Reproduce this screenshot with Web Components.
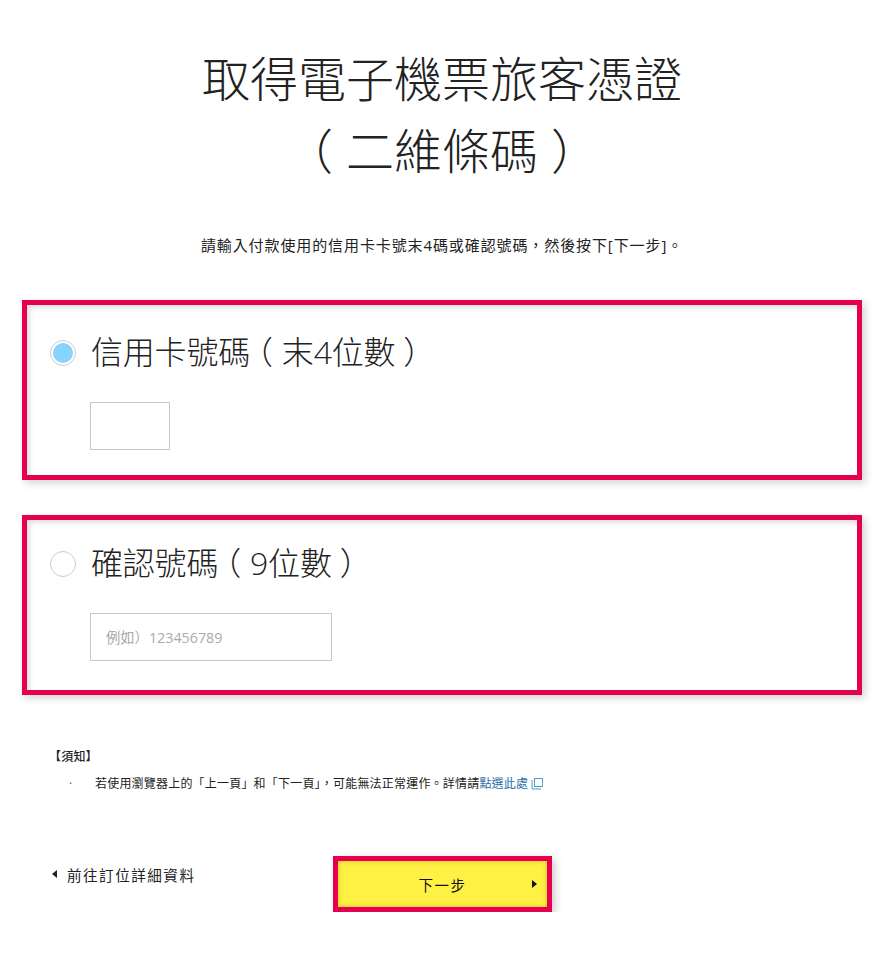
<!DOCTYPE html>
<html lang="zh-Hant">
<head>
<meta charset="utf-8">
<title>取得電子機票旅客憑證</title>
<style>
  body {
    margin: 0;
    background: #fff;
    color: #222;
    font-family: "Open Sans", "Noto Sans CJK TC", sans-serif;
  }
</style>
</head>
<body>
<ticket-page>
  <span slot="title">取得電子機票旅客憑證<br>（二維條碼）</span>
  <span slot="lead">請輸入付款使用的信用卡卡號末4碼或確認號碼，然後按下[下一步]。</span>
  <option-box label="信用卡號碼（末4位數）" input-width="80" top="24" checked></option-box>
  <option-box label="確認號碼（9位數）" input-width="242" top="20" placeholder="例如）123456789"></option-box>
  <notice-list heading="【須知】">若使用瀏覽器上的「上一頁」和「下一頁」，可能無法正常運作。詳情請<a href="#">點選此處</a></notice-list>
  <form-actions back="前往訂位詳細資料" next="下一步"></form-actions>
</ticket-page>

<script>
// spreads the full-width brackets away from the text next to them
function spaceBrackets(text) {
  return text
    .replace(/（/g, '<span class="open">（</span>')
    .replace(/）/g, '<span class="close">）</span>');
}

class TicketPage extends HTMLElement {
  constructor() {
    super();
    const shadow = this.attachShadow({ mode: 'open' });
    shadow.innerHTML = `
      <style>
        :host { display: block; width: 884px; padding: 43px 22px 0; box-sizing: border-box; }
        h1 {
          margin: 0;
          font-size: 48px;
          font-weight: 200;
          line-height: 72px;
          text-align: center;
          color: #222;
        }
        p {
          margin: 46px 0 43px;
          font-size: 15px;
          line-height: 24px;
          letter-spacing: 0.9px;
          text-align: center;
        }
        .boxes { display: flex; flex-direction: column; gap: 35px; }
      </style>
      <h1><slot name="title"></slot></h1>
      <p><slot name="lead"></slot></p>
      <div class="boxes"><slot></slot></div>
    `;
    const title = this.querySelector('[slot=title]');
    title.innerHTML = title.innerHTML
      .replace('（', '<span style="margin-right:13px">（</span>')
      .replace('）', '<span style="margin-left:13px">）</span>');
  }
}

class OptionBox extends HTMLElement {
  constructor() {
    super();
    const shadow = this.attachShadow({ mode: 'open' });
    const width = this.getAttribute('input-width');
    const top = this.getAttribute('top');
    const placeholder = this.getAttribute('placeholder') || '';
    shadow.innerHTML = `
      <style>
        :host {
          display: block;
          height: 180px;
          box-sizing: border-box;
          border: 5px solid #e4004f;
          padding: ${top}px 23px 0;
          box-shadow: 3px 3px 8px rgba(0, 0, 0, 0.18), inset 3px 3px 5px rgba(0, 0, 0, 0.12);
        }
        .row { display: flex; align-items: center; gap: 16px; height: 48px; }
        .radio {
          width: 26px;
          height: 26px;
          box-sizing: border-box;
          border: 1px solid #ccc;
          border-radius: 50%;
          background: #fff;
          padding: 2px;
          background-clip: content-box;
        }
        .radio.on { background-color: #87d3fb; }
        .label {
          font-size: 32px;
          font-weight: 300;
          letter-spacing: -0.2px;
          color: #222;
          padding-bottom: 6px;
          margin-left: -1px;
        }
        .open { font-feature-settings: "halt"; margin: 0 9px 0 7px; }
        .close { font-feature-settings: "halt"; margin: 0 0 0 8px; }
        input {
          display: block;
          margin: 25px 0 0 40px;
          width: ${width}px;
          height: 48px;
          box-sizing: border-box;
          border: 1px solid #c8c8c8;
          padding: 0 15px;
          font: inherit;
          font-size: 14.3px;
          outline: none;
        }
        input::placeholder { color: #aaa; opacity: 1; }
      </style>
      <div class="row">
        <span class="radio ${this.hasAttribute('checked') ? 'on' : ''}"></span>
        <span class="label">${spaceBrackets(this.getAttribute('label'))}</span>
      </div>
      <input type="text" placeholder="${placeholder}">
    `;
  }
}

class NoticeList extends HTMLElement {
  constructor() {
    super();
    const shadow = this.attachShadow({ mode: 'open' });
    shadow.innerHTML = `
      <style>
        :host { display: block; margin: 17px 0 0 27px; font-size: 12px; letter-spacing: 0.2px; color: #222; }
        .head { font-weight: 500; line-height: 20px; }
        .item { display: flex; margin-top: 7px; line-height: 20px; }
        .dot { width: 46px; padding-left: 20px; box-sizing: border-box; color: #1a6fa8; }
        svg { vertical-align: -2px; margin-left: 3px; }
        ::slotted(a) { color: #2a6fa5; text-decoration: none; }
      </style>
      <div class="head">${this.getAttribute('heading')}</div>
      <div class="item">
        <span class="dot">·</span>
        <span><slot></slot><svg width="13" height="13" viewBox="0 0 13 13" fill="none" stroke="#4a9cc9"><rect x="3.5" y="1.5" width="8" height="8"/><path d="M1 3v9h9"/></svg></span>
      </div>
    `;
  }
}

class FormActions extends HTMLElement {
  constructor() {
    super();
    const shadow = this.attachShadow({ mode: 'open' });
    shadow.innerHTML = `
      <style>
        :host { display: grid; grid-template-columns: 281px 219px; margin: 27px 0 0 30px; }
        a {
          display: flex;
          align-items: center;
          gap: 10px;
          height: 36px;
          font-size: 14.6px;
          letter-spacing: 0.1em;
          color: #222;
          text-decoration: none;
        }
        .left { width: 0; height: 0; border: 4.5px solid transparent; border-left-width: 0; border-right: 5px solid #222; }
        button {
          position: relative;
          height: 56px;
          border: 5px solid #e4004f;
          background: #fff143;
          padding: 0;
          font: inherit;
          font-size: 14.5px;
          letter-spacing: 0.1em;
          color: #111;
          box-shadow: 3px 3px 8px rgba(0, 0, 0, 0.2), inset 0 0 5px rgba(120, 100, 0, 0.35);
        }
        .right {
          position: absolute;
          right: 10px;
          top: 19px;
          width: 0;
          height: 0;
          border: 4.5px solid transparent;
          border-right-width: 0;
          border-left: 5px solid #111;
        }
      </style>
      <a href="#"><span class="left"></span>${this.getAttribute('back')}</a>
      <button type="button">${this.getAttribute('next')}<span class="right"></span></button>
    `;
  }
}

customElements.define('ticket-page', TicketPage);
customElements.define('option-box', OptionBox);
customElements.define('notice-list', NoticeList);
customElements.define('form-actions', FormActions);
</script>
</body>
</html>
